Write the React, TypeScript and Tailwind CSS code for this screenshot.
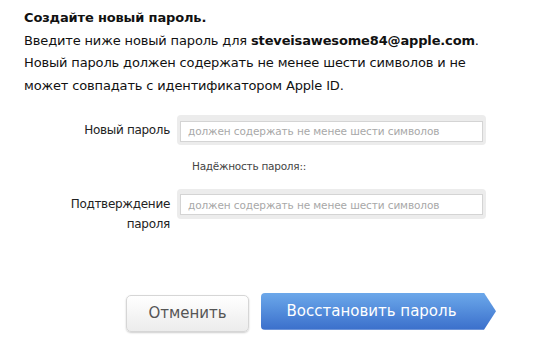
const placeholder = "должен содержать не менее шести символов";

function Field({ label }: { label: React.ReactNode }) {
  return (
    <div className="flex items-start">
      <div className="w-[173px] shrink-0 pr-[3px] pt-[5px] text-right text-[12px] leading-[20px] tracking-[-0.3px] text-[#222]">{label}</div>
      <div className="ml-[4px] rounded-[4px] bg-[#ececec] p-[3px]">
        <input
          readOnly
          placeholder={placeholder}
          className="h-[21px] w-[303px] border border-[#d4d4d4] bg-white px-[7px] text-[10.5px] tracking-[-0.1px] text-[#222] outline-none placeholder:text-[#a8a8a8]"
        />
      </div>
    </div>
  );
}

export default function App() {
  return (
    <div className="h-[353px] w-[534px] bg-white font-['DejaVu_Sans',sans-serif] text-[#111]">
      <div className="pl-[24px] pt-[7px] text-[13px] leading-[22.5px] tracking-[-0.15px]">
        <p className="font-bold">Создайте новый пароль.</p>
        <p className="whitespace-nowrap">
          Введите ниже новый пароль для <span className="font-bold">steveisawesome84@apple.com</span>.
        </p>
        <p className="whitespace-nowrap">Новый пароль должен содержать не менее шести символов и не</p>
        <p className="whitespace-nowrap">может совпадать с идентификатором Apple ID.</p>
      </div>

      <div className="mt-[18px] flex flex-col">
        <Field label="Новый пароль" />
        <p className="ml-[192px] mt-[14px] text-[10.5px] tracking-[-0.25px] text-[#444]">Надёжность пароля::</p>
        <div className="mt-[14px]">
          <Field
            label={
              <>
                Подтверждение
                <br />
                пароля
              </>
            }
          />
        </div>
      </div>

      <div className="mt-[59px] flex items-start pl-[126px]">
        <button className="mt-[2px] h-[37px] w-[123px] rounded-[5px] border border-[#d6d6d6] bg-gradient-to-b from-white to-[#ececec] text-[15px] text-[#555] shadow-[0_1px_2px_rgba(0,0,0,0.2)]">
          Отменить
        </button>
        <button className="ml-[12px] h-[37px] w-[235px] rounded-l-[4px] bg-gradient-to-b from-[#6ca8ea] to-[#3b6fcb] pr-[14px] text-[15px] text-white [clip-path:polygon(0_0,223px_0,100%_50%,223px_100%,0_100%)]">
          Восстановить пароль
        </button>
      </div>
    </div>
  );
}
